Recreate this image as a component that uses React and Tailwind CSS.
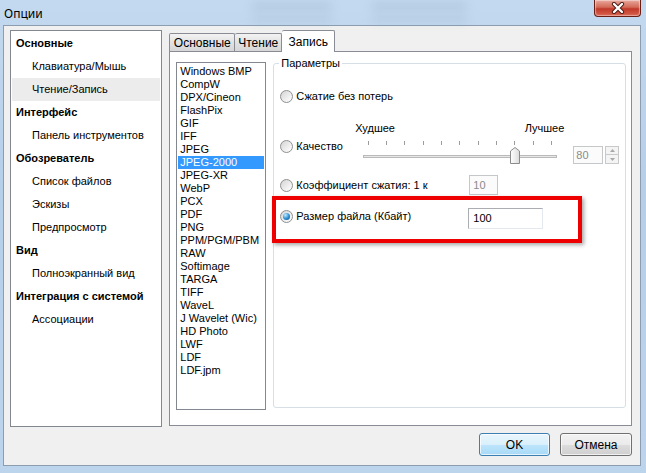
import React from 'react';

const navItems = [
    { label: 'Основные', head: true },
    { label: 'Клавиатура/Мышь' },
    { label: 'Чтение/Запись', selected: true },
    { label: 'Интерфейс', head: true },
    { label: 'Панель инструментов' },
    { label: 'Обозреватель', head: true },
    { label: 'Список файлов' },
    { label: 'Эскизы' },
    { label: 'Предпросмотр' },
    { label: 'Вид', head: true },
    { label: 'Полноэкранный вид' },
    { label: 'Интеграция с системой', head: true },
    { label: 'Ассоциации' },
];

const formats = [
    'Windows BMP', 'CompW', 'DPX/Cineon', 'FlashPix', 'GIF', 'IFF', 'JPEG', 'JPEG-2000',
    'JPEG-XR', 'WebP', 'PCX', 'PDF', 'PNG', 'PPM/PGM/PBM', 'RAW', 'Softimage', 'TARGA',
    'TIFF', 'WaveL', 'J Wavelet (Wic)', 'HD Photo', 'LWF', 'LDF', 'LDF.jpm',
];

const ticks = [13, 31, 49, 68, 86, 104, 123, 141, 159, 178, 196];

const Radio = ({ checked }) => (
    <span className="flex h-[13px] w-[13px] shrink-0 items-center justify-center rounded-full border border-[#8e8f8f] bg-[linear-gradient(135deg,#d4d4d4,#f4f4f4_70%,#ffffff)]">
        {checked && (
            <span className="h-[7px] w-[7px] rounded-full bg-[radial-gradient(circle_at_35%_30%,#c4ecff,#2a8ad0_55%,#0b4f8a)]" />
        )}
    </span>
);

const RadioLabel = ({ checked, children, className = '' }) => (
    <div className={`flex items-center gap-[3px] ${className}`}>
        <Radio checked={checked} />
        <span>{children}</span>
    </div>
);

const Slider = () => (
    <svg width="209" height="32" viewBox="0 0 209 32">
        {ticks.map((x) => (
            <line key={x} x1={x + 0.5} y1="6" x2={x + 0.5} y2="10" stroke="#9c9c9c" strokeWidth="1" />
        ))}
        <rect x="8.5" y="20.5" width="193" height="2" fill="#e8e8e8" stroke="#b9b9b9" strokeWidth="1" />
        <defs>
            <linearGradient id="thumb" x1="0" y1="0" x2="1" y2="0">
                <stop offset="0" stopColor="#ffffff" />
                <stop offset="1" stopColor="#dcdcdc" />
            </linearGradient>
        </defs>
        <path d="M155.5 28.5 L155.5 16 L160 12.5 L164.5 16 L164.5 28.5 Z" fill="url(#thumb)" stroke="#8b8b8b" strokeWidth="1" strokeLinejoin="round" />
    </svg>
);

const App = () => {
    return (
        <div className="relative h-[473px] w-[646px] overflow-hidden bg-[linear-gradient(180deg,#c3d9ef,#b6cfe9_40%,#bcd4ec)] font-['Liberation_Sans',Arial,sans-serif] text-[11px] text-black">
            {/* blurred glass behind title bar */}
            <div className="absolute left-[252px] top-[2px] h-[8px] w-[80px] rounded-full bg-[#8ea4bb]/25 blur-[4px]" />
            <div className="absolute left-[372px] top-[2px] h-[8px] w-[95px] rounded-full bg-[#8ea4bb]/25 blur-[4px]" />
            <div className="absolute left-[252px] top-[15px] h-[8px] w-[80px] rounded-full bg-[#8ea4bb]/20 blur-[4px]" />
            <div className="absolute left-[372px] top-[15px] h-[8px] w-[95px] rounded-full bg-[#8ea4bb]/20 blur-[4px]" />

            {/* Title bar */}
            <div className="relative flex h-[25px] items-center pl-[4px] pt-[2px] font-['Noto_Sans',sans-serif] text-[12px]">
                Опции
            </div>
            <div className="absolute right-[5px] top-0 flex h-[17px] w-[47px] items-center justify-center rounded-b-[4px] border border-t-0 border-[#6a1f16] bg-[linear-gradient(180deg,#e8a89c,#d46a58_45%,#c0392a_55%,#d9624c)] shadow-[inset_0_0_1px_1px_rgba(255,255,255,0.45)]">
                <svg width="14" height="12" viewBox="0 0 14 12">
                    <path d="M3 2 L11 10 M11 2 L3 10" stroke="#4a1a14" strokeWidth="4.2" strokeLinecap="round" />
                    <path d="M3 2 L11 10 M11 2 L3 10" stroke="#ffffff" strokeWidth="2.4" strokeLinecap="round" />
                </svg>
            </div>

            {/* Client area */}
            <div className="ml-[3px] flex h-[441px] w-[638px] flex-col border border-[#8d9db0] bg-[#f0f0f0] pl-[6px] pr-[8px] pt-[4px]">
                <div className="flex gap-[7px]">
                    {/* Left nav */}
                    <div className="h-[397px] w-[153px] border border-[#828790] bg-white pt-[1px]">
                        {navItems.map((item) => (
                            <div
                                key={item.label}
                                className={`mx-[1px] flex h-[23px] items-center ${item.head ? 'pl-[4px] font-bold' : 'pl-[20px]'} ${item.selected ? 'bg-[#ececec]' : ''}`}
                            >
                                {item.label}
                            </div>
                        ))}
                    </div>

                    {/* Tabs */}
                    <div className="flex w-[465px] flex-col">
                        <div className="flex h-[21px] items-end text-[12px]">
                            <div className="flex h-[18px] w-[66px] items-center justify-center rounded-t-[2px] border border-b-0 border-[#898c95] bg-[linear-gradient(180deg,#f3f3f3,#e2e2e2_50%,#d6d6d6)]">
                                Основные
                            </div>
                            <div className="flex h-[18px] w-[47px] items-center justify-center rounded-t-[2px] border border-b-0 border-l-0 border-[#898c95] bg-[linear-gradient(180deg,#f3f3f3,#e2e2e2_50%,#d6d6d6)]">
                                Чтение
                            </div>
                            <div className="relative z-10 -mb-[1px] flex h-[22px] w-[53px] items-start justify-center rounded-t-[2px] border border-b-0 border-l-0 border-[#898c95] bg-white pt-[2px]">
                                Запись
                            </div>
                        </div>
                        <div className="flex h-[375px] items-start gap-[7px] border border-[#898c95] bg-white pl-[6px] pt-[10px]">
                            {/* Format list */}
                            <div className="h-[348px] w-[90px] shrink-0 border border-[#828790] bg-white px-[1px] pt-[2px] text-[11px]">
                                {formats.map((f) => (
                                    <div
                                        key={f}
                                        className={`h-[13px] pl-[2px] leading-[13px] ${f === 'JPEG-2000' ? 'bg-[#3399ff] text-white' : ''}`}
                                    >
                                        {f}
                                    </div>
                                ))}
                            </div>

                            {/* Group box */}
                            <div className="relative mt-[1px] flex h-[345px] w-[353px] flex-col rounded-[3px] border border-[#d5dfe5] pl-[6px]">
                                <div className="absolute left-[5px] top-[-8px] bg-white px-[2px] leading-[14px]">Параметры</div>

                                <RadioLabel className="mt-[24px] h-[16px]">Сжатие без потерь</RadioLabel>

                                <div className="mt-[17px] flex h-[46px] items-start">
                                    <RadioLabel className="mt-[17px] h-[16px] w-[75px]">Качество</RadioLabel>
                                    <div className="flex w-[209px] flex-col">
                                        <div className="flex h-[14px] items-center justify-between">
                                            <span>Худшее</span>
                                            <span>Лучшее</span>
                                        </div>
                                        <Slider />
                                    </div>
                                    <div className="ml-[9px] mt-[25px] flex h-[18px] items-stretch gap-[2px]">
                                        <div className="flex w-[30px] items-center border border-[#c5c8cb] bg-[#fbfbfb] pl-[2px] text-[#8a8a8a]">80</div>
                                        <div className="flex w-[14px] flex-col">
                                            <div className="flex h-[9px] items-center justify-center border border-[#c9c9c9] bg-[#f4f4f4]">
                                                <svg width="5" height="3" viewBox="0 0 5 3"><path d="M0 3 L2.5 0 L5 3 Z" fill="#a8a8a8" /></svg>
                                            </div>
                                            <div className="flex h-[9px] items-center justify-center border border-t-0 border-[#c9c9c9] bg-[#f4f4f4]">
                                                <svg width="5" height="3" viewBox="0 0 5 3"><path d="M0 0 L2.5 3 L5 0 Z" fill="#a8a8a8" /></svg>
                                            </div>
                                        </div>
                                    </div>
                                </div>

                                <div className="mt-[8px] flex h-[20px] items-center">
                                    <RadioLabel className="w-[189px]">Коэффициент сжатия: 1 к</RadioLabel>
                                    <div className="flex h-[20px] w-[29px] items-center border border-[#c5c8cb] bg-[#fbfbfb] pl-[3px] text-[#8a8a8a]">10</div>
                                </div>

                                <div className="mt-[13px] flex h-[21px] items-start">
                                    <RadioLabel checked className="h-[16px] w-[188px]">Размер файла (Кбайт)</RadioLabel>
                                    <div className="flex h-[21px] w-[75px] items-center border border-[#abadb3] border-r-[#e3e9ef] border-b-[#e3e9ef] bg-white pl-[4px]">100</div>
                                </div>

                                {/* red highlight */}
                                <div className="absolute left-[-2px] top-[132px] h-[47px] w-[310px] border-4 border-[#ee0000] shadow-[2px_2px_4px_rgba(0,0,0,0.35)]" />
                            </div>
                        </div>
                    </div>
                </div>

                {/* Buttons */}
                <div className="mt-[6px] flex justify-end gap-[10px]">
                    <button className="h-[23px] w-[71px] rounded-[3px] border border-[#3c7fb1] bg-[linear-gradient(180deg,#eaf6fd,#d9f0fc_50%,#bee6fd_51%,#a7d9f5)] shadow-[inset_0_0_0_1px_rgba(255,255,255,0.7)] text-[12px]">
                        OK
                    </button>
                    <button className="h-[23px] w-[72px] rounded-[3px] border border-[#707070] bg-[linear-gradient(180deg,#f2f2f2,#ebebeb_50%,#dddddd_51%,#cfcfcf)] shadow-[inset_0_0_0_1px_rgba(255,255,255,0.7)] text-[12px]">
                        Отмена
                    </button>
                </div>
            </div>
        </div>
    );
};

export default App;
